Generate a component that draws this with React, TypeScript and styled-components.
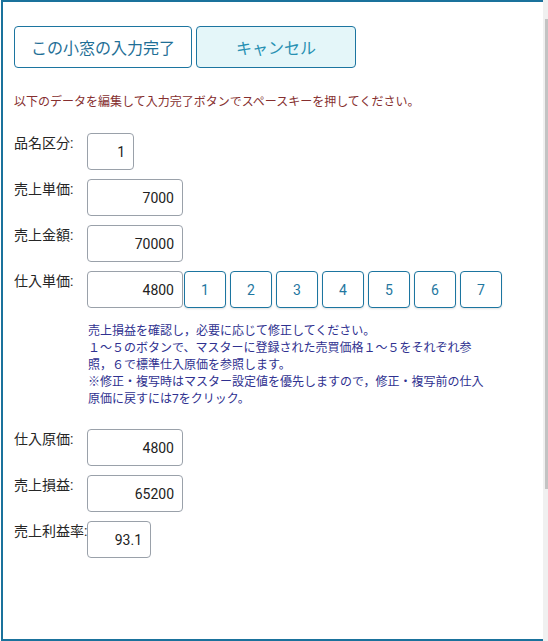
import React from "react";
import styled, { createGlobalStyle } from "styled-components";

const Global = createGlobalStyle`
  html, body { margin: 0; padding: 0; background: #fff; }
  body { font-family: Roboto, "Noto Sans CJK JP", sans-serif; }
`;

const Window = styled.div`
  display: flex;
  width: 548px;
  height: 641px;
  overflow: hidden;
`;

const Frame = styled.div`
  flex: 1;
  margin-left: 1px;
  border-top: 2px solid #1a729c;
  border-left: 2px solid #1a729c;
  border-bottom: 2px solid #1a729c;
  box-sizing: border-box;
  padding: 24px 0 0 11px;
  display: flex;
  flex-direction: column;
`;

const ScrollTrack = styled.div`
  width: 5px;
  height: 641px;
  background: #f0f0f0;
  display: flex;
  justify-content: flex-end;
`;

const ScrollThumb = styled.div`
  margin-top: 19px;
  width: 3px;
  height: 470px;
  background: #c3c3c3;
`;

const ButtonRow = styled.div`
  display: flex;
  gap: 4px;
`;

const ActionButton = styled.button<{ $variant?: "primary" | "cancel" }>`
  box-sizing: border-box;
  height: 42px;
  width: ${(p) => (p.$variant === "cancel" ? "160px" : "178px")};
  border: 1px solid #1c75a0;
  border-radius: 4px;
  background: ${(p) => (p.$variant === "cancel" ? "#e4f6f9" : "#fff")};
  color: ${(p) => (p.$variant === "cancel" ? "#2790b2" : "#1f6f96")};
  font-family: Roboto, "Noto Sans CJK JP", sans-serif;
  font-size: 16px;
  padding: 0;
  cursor: pointer;
`;

const Message = styled.div`
  margin-top: 26px;
  font-size: 12px;
  line-height: 17px;
  color: #862f2f;
`;

const Rows = styled.div<{ $top: number }>`
  display: flex;
  flex-direction: column;
  gap: 9px;
  margin-top: ${(p) => p.$top}px;
`;

const Row = styled.div`
  display: flex;
  align-items: flex-start;
`;

const Label = styled.div`
  width: 73px;
  flex: none;
  font-size: 14px;
  line-height: 18px;
  padding-top: 1px;
  color: #262626;
  white-space: nowrap;
`;

const Field = styled.input<{ $w: number }>`
  box-sizing: border-box;
  width: ${(p) => p.$w}px;
  height: 37px;
  border: 1px solid #9aa1aa;
  border-radius: 4px;
  padding: 0 8px 0 4px;
  text-align: right;
  font-family: Roboto, "Noto Sans CJK JP", sans-serif;
  font-size: 14px;
  color: #222;
  background: #fff;
  outline: none;
`;

const PriceButtons = styled.div`
  display: flex;
  gap: 4px;
  margin-left: 1px;
`;

const NumButton = styled.button`
  box-sizing: border-box;
  width: 42px;
  height: 37px;
  border: 1px solid #1c75a0;
  border-radius: 4px;
  background: #fff;
  color: #1f77a0;
  font-family: Roboto, sans-serif;
  font-size: 14px;
  padding: 0;
  box-shadow: 0 1px 2px rgba(0, 0, 0, 0.12);
`;

const Note = styled.div`
  margin: 15px 0 0 74px;
  font-size: 12px;
  line-height: 17px;
  color: #2f3190;
  white-space: nowrap;
`;

const topFields = [
  { label: "品名区分:", value: "1", w: 47 },
  { label: "売上単価:", value: "7000", w: 96 },
  { label: "売上金額:", value: "70000", w: 96 },
];

const bottomFields = [
  { label: "仕入原価:", value: "4800", w: 96 },
  { label: "売上損益:", value: "65200", w: 96 },
  { label: "売上利益率:", value: "93.1", w: 64 },
];

const noteLines = [
  "売上損益を確認し，必要に応じて修正してください。",
  "１～５のボタンで、マスターに登録された売買価格１～５をそれぞれ参",
  "照，６で標準仕入原価を参照します。",
  "※修正・複写時はマスター設定値を優先しますので，修正・複写前の仕入",
  "原価に戻すには7をクリック。",
];

export default function App() {
  return (
    <Window>
      <Global />
      <Frame>
        <ButtonRow>
          <ActionButton $variant="primary">この小窓の入力完了</ActionButton>
          <ActionButton $variant="cancel">キャンセル</ActionButton>
        </ButtonRow>
        <Message>以下のデータを編集して入力完了ボタンでスペースキーを押してください。</Message>
        <Rows $top={22}>
          {topFields.map((f) => (
            <Row key={f.label}>
              <Label>{f.label}</Label>
              <Field $w={f.w} defaultValue={f.value} />
            </Row>
          ))}
          <Row>
            <Label>仕入単価:</Label>
            <Field $w={96} defaultValue="4800" />
            <PriceButtons>
              {[1, 2, 3, 4, 5, 6, 7].map((n) => (
                <NumButton key={n}>{n}</NumButton>
              ))}
            </PriceButtons>
          </Row>
        </Rows>
        <Note>
          {noteLines.map((l, i) => (
            <div key={i}>{l}</div>
          ))}
        </Note>
        <Rows $top={21}>
          {bottomFields.map((f) => (
            <Row key={f.label}>
              <Label>{f.label}</Label>
              <Field $w={f.w} defaultValue={f.value} />
            </Row>
          ))}
        </Rows>
      </Frame>
      <ScrollTrack>
        <ScrollThumb />
      </ScrollTrack>
    </Window>
  );
}
